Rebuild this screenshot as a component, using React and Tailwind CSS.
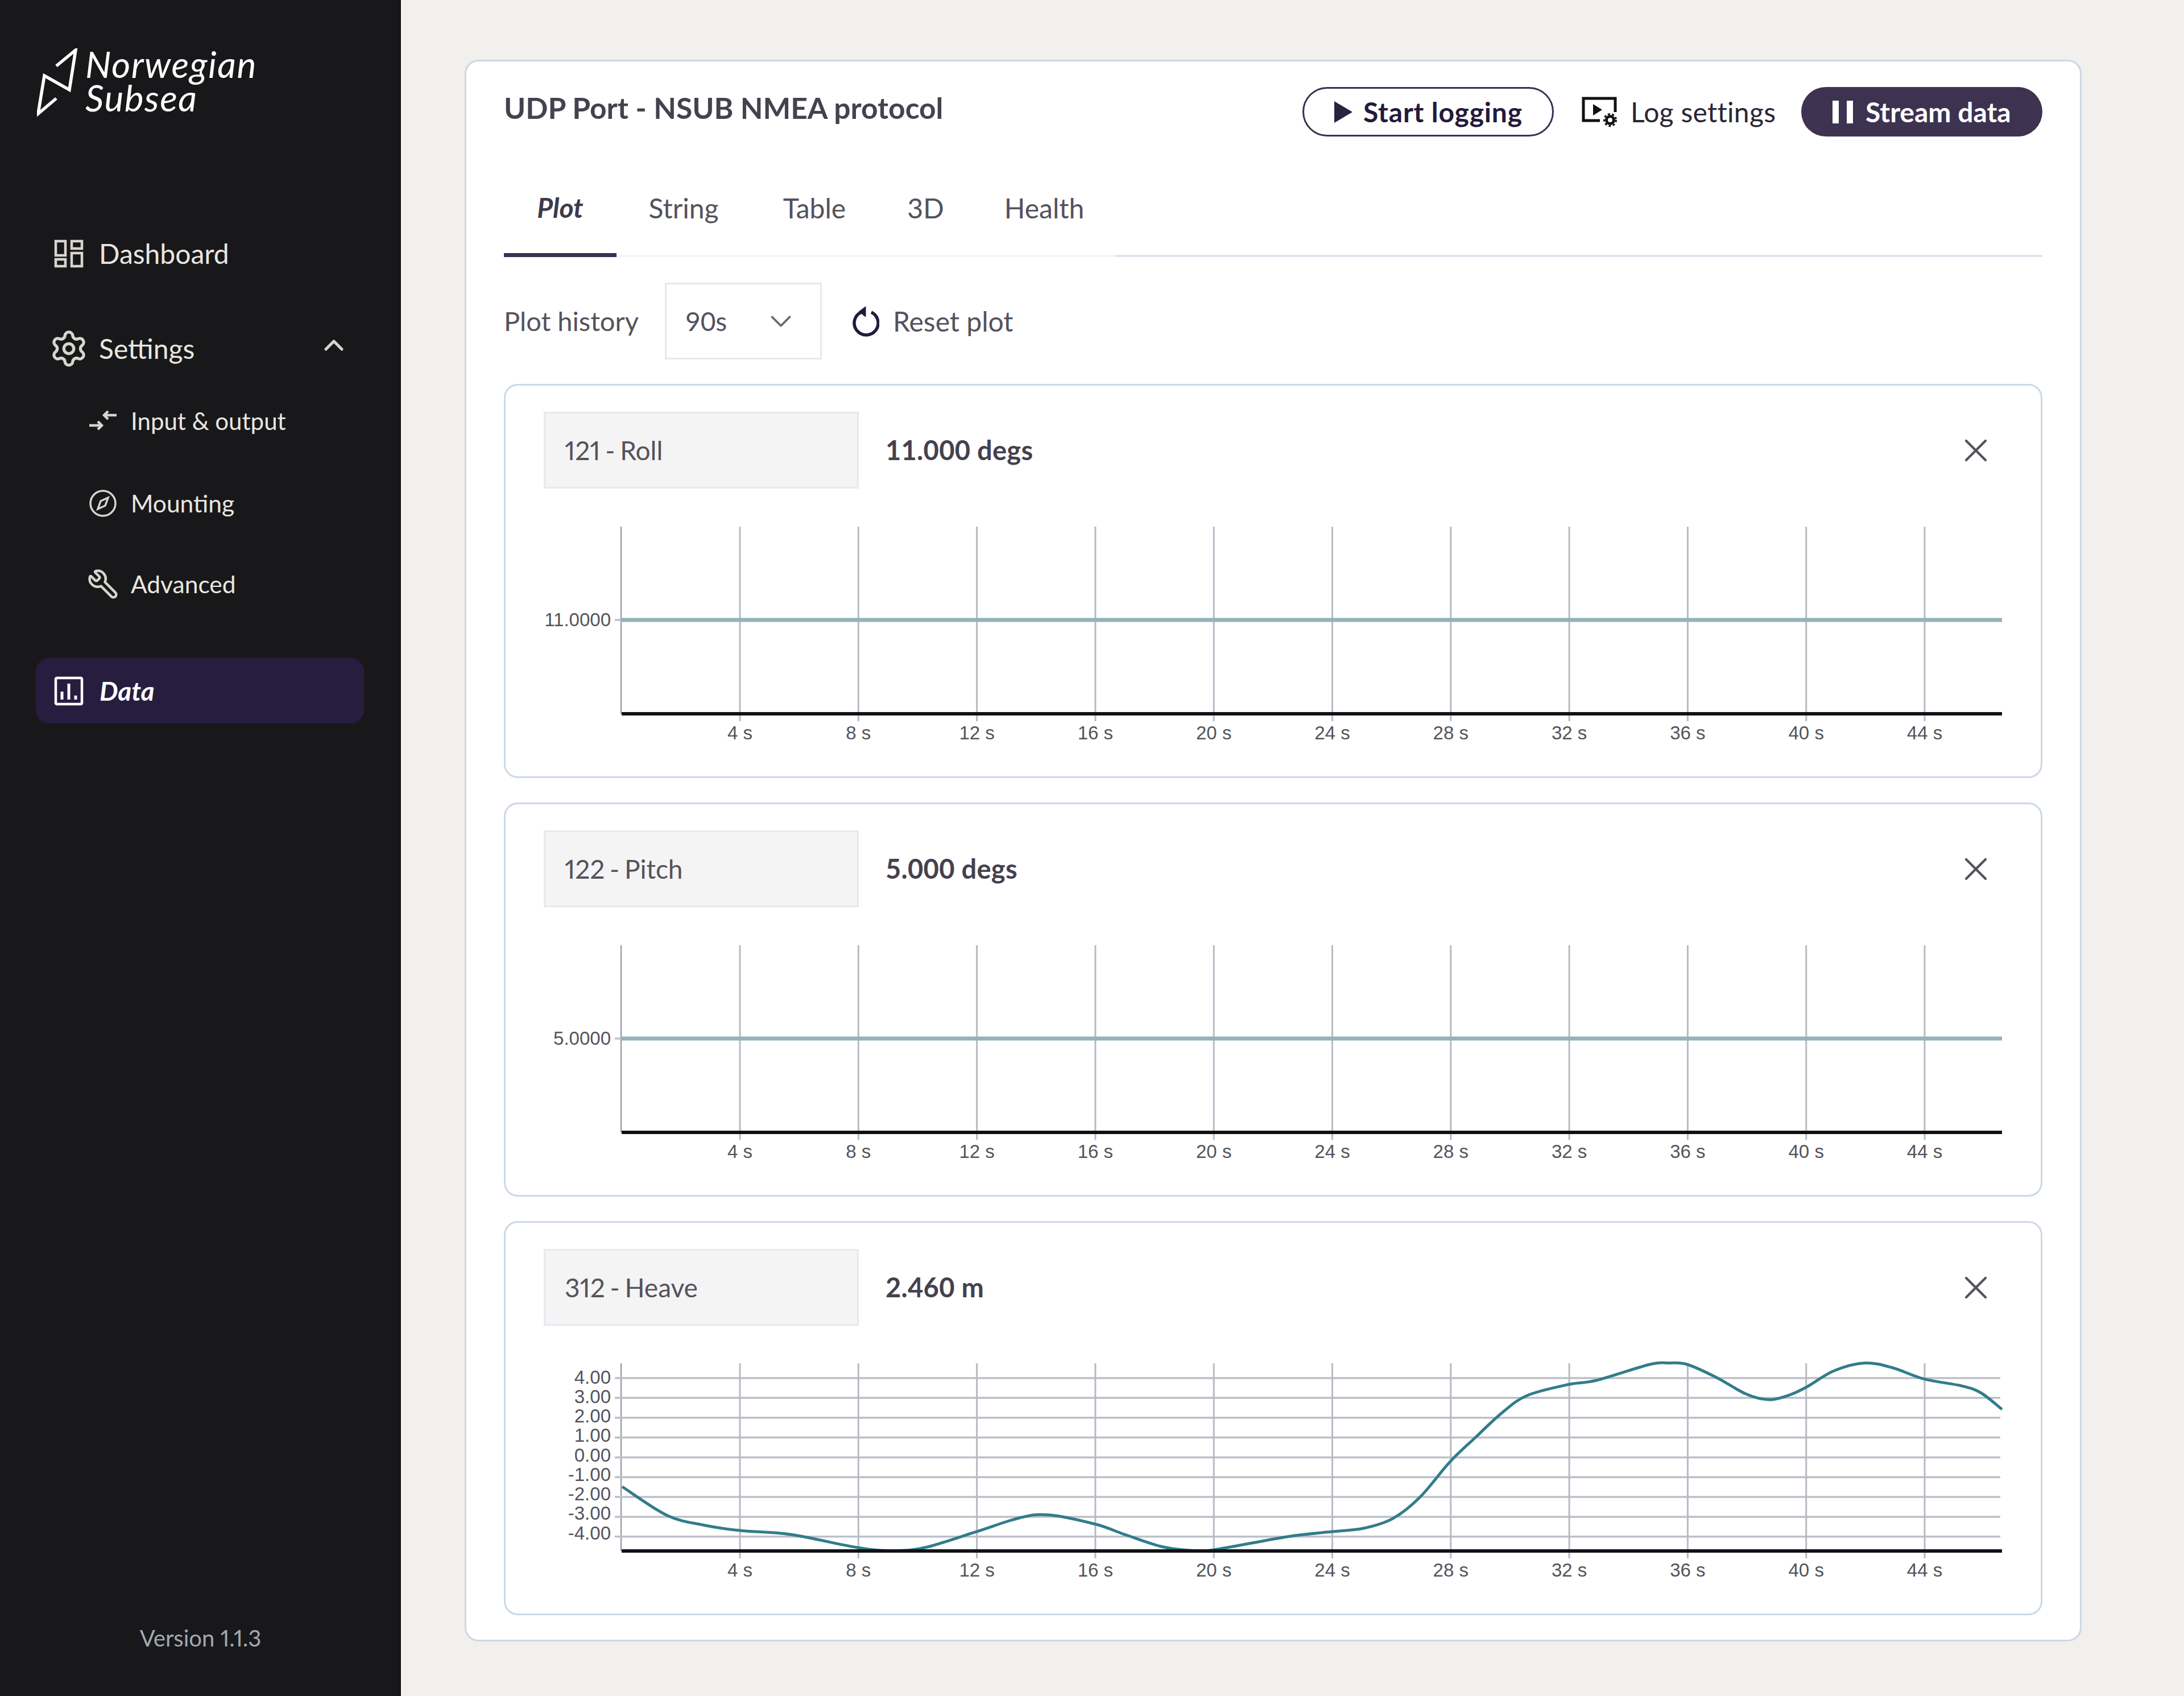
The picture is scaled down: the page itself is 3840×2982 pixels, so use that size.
import React from "react";
import { Settings, ChevronUp, Wrench, ChevronDown, X } from "lucide-react";

const FONT = "font-['Lato','Noto_Sans',sans-serif]";
const CHART_FONT = "'Liberation Sans', Arial, sans-serif";

const curve = [
  [1094,2613],[1173,2663.5],[1237,2680.5],[1301,2690],[1390,2697],[1508,2720],[1569,2725.5],[1626,2720],[1715,2692.6],[1792,2668],[1843,2662.5],
  [1926.5,2679],[1977.5,2697],[2041,2718],[2092,2725],[2134,2724],[2264.5,2700.7],[2342,2692],[2398,2686],[2449.5,2668.6],[2497,2631],
  [2550,2568.6],[2593,2527.5],[2641,2483],[2685.5,2452.5],[2759,2433],[2807,2426],[2900.5,2398],[2935,2395.5],[2966.5,2398],[3018,2421],
  [3070,2450],[3110,2460],[3144,2452.6],[3176,2438],[3225,2409],[3279,2395.5],[3328,2404],[3383,2423.6],[3449,2435.7],[3483,2448],[3520,2477],
].map(([x, y]) => [x - 956, y - 2372]);

function smooth(p) {
  let d = `M${p[0][0]} ${p[0][1]}`;
  for (let i = 0; i < p.length - 1; i++) {
    const a = p[Math.max(i - 1, 0)], b = p[i], c = p[i + 1], e = p[Math.min(i + 2, p.length - 1)];
    const c1 = [b[0] + (c[0] - a[0]) / 6, b[1] + (c[1] - a[1]) / 6];
    const c2 = [c[0] - (e[0] - b[0]) / 6, c[1] - (e[1] - b[1]) / 6];
    d += ` C${c1[0].toFixed(1)} ${c1[1].toFixed(1)} ${c2[0].toFixed(1)} ${c2[1].toFixed(1)} ${c[0]} ${c[1]}`;
  }
  return d;
}

const ticks = [4, 8, 12, 16, 20, 24, 28, 32, 36, 40, 44];

function Chart({ yTicks, flat, series }) {
  const top = series ? 24 : 25;
  const axis = 354;
  return (
    <svg width="2600" height="420" className="block mt-[42px]" fontFamily={CHART_FONT}>
      <line x1="136" x2="136" y1={top} y2={axis} stroke="#9ba0a8" strokeWidth="2.5" />
      {yTicks.map(([label, y, ly]) => (
        <g key={label}>
          <line x1="125" x2={series ? 2561 : 136} y1={y} y2={y} stroke="#bcc0c8" strokeWidth="3.5" />
          <text x="118" y={ly} textAnchor="end" dominantBaseline="central" fontSize="33" fill="#54545c">{label}</text>
        </g>
      ))}
      {ticks.map((t, i) => {
        const x = 345 + i * 208.3;
        return (
          <g key={t}>
            <line x1={x} x2={x} y1={top} y2={axis + 13} stroke="#b6bbc3" strokeWidth="3" />
            <text x={x} y={axis + 33} textAnchor="middle" dominantBaseline="central" fontSize="33" fill="#54545c">{t} s</text>
          </g>
        );
      })}
      {flat !== undefined && <line x1="136" x2="2564" y1={flat} y2={flat} stroke="#94b2b9" strokeWidth="7" />}
      {series && <path d={smooth(curve)} fill="none" stroke="#327c8a" strokeWidth="5" strokeLinejoin="round" />}
      <line x1="137" x2="2564" y1={axis} y2={axis} stroke="#101114" strokeWidth="6" />
    </svg>
  );
}

function Panel({ label, value, yTicks, flat, series }) {
  return (
    <div className="h-[693px] border-[3px] border-[#cbd8e7] rounded-[24px] bg-white pt-[46px] pl-[67px]">
      <div className="flex items-center">
        <div className="w-[554px] h-[135px] bg-[#f4f4f4] border-[3px] border-[#e6e9ef] flex items-center pl-[34px] text-[46px] text-[#55525c] proportional-nums [word-spacing:-3px]">{label}</div>
        <div className="ml-[47px] text-[47px] tracking-[0.3px] font-bold text-[#45414e]">{value}</div>
        <X className="ml-auto mr-[80px] w-[68px] h-[68px] text-[#55525c]" strokeWidth={1.5} />
      </div>
      <Chart yTicks={yTicks} flat={flat} series={series} />
    </div>
  );
}

function NavRow({ icon, children, className = "", textClass = "" }) {
  return (
    <div className={`flex items-center h-[60px] ${className}`}>
      {icon}
      <span className={textClass}>{children}</span>
    </div>
  );
}

const heaveTicks = ["4.00", "3.00", "2.00", "1.00", "0.00", "-1.00", "-2.00", "-3.00", "-4.00"].map((l, i) => {
  const y = 50 + i * 34.85;
  return [l, y, y - 2 - i * 0.6];
});

export default function App() {
  return (
    <div className={`flex w-[3840px] h-[2982px] bg-[#f1f0ec] ${FONT}`}>
      <aside className="w-[707px] shrink-0 h-full bg-[#18181a] border-r-[2px] border-[#f8f8f5] flex flex-col pt-[85px]">
        <div className="flex h-[120px] pl-[65px]">
          <svg width="72" height="120" viewBox="65 85 72 120" className="shrink-0">
            <polyline points="99,116 133,88 122,158 78,133 67,200 99,173" fill="none" stroke="#ffffff" strokeWidth="5.5" />
          </svg>
          <div className="ml-[13px] -mt-[2px] text-[64px] leading-[59px] tracking-[1.5px] italic font-normal text-white">Norwegian<br />Subsea</div>
        </div>

        <NavRow className="mt-[211px] pl-[95px] text-[#e9e6e0] text-[48px]" icon={
          <svg width="52" height="50" viewBox="0 0 52 50" fill="none" stroke="#d8d5cf" strokeWidth="4.5" className="mr-[27px]">
            <rect x="3" y="3" width="17" height="25" /><rect x="31" y="3" width="18" height="13" />
            <rect x="3" y="35" width="17" height="12" /><rect x="31" y="24" width="18" height="23" />
          </svg>}>Dashboard</NavRow>

        <div className="mt-[107px] flex items-center h-[60px] pl-[86px] text-[#e9e6e0] text-[48px]">
          <Settings className="w-[70px] h-[70px] mr-[18px] text-[#d8d5cf]" strokeWidth={1.8} />
          <span>Settings</span>
          <ChevronUp className="w-[56px] h-[56px] ml-[217px] mb-[12px] text-[#d8d5cf]" strokeWidth={2.2} />
        </div>

        <NavRow className="mt-[67px] pl-[155px] text-[#e9e6e0] text-[42px]" icon={
          <svg width="52" height="40" viewBox="0 0 52 40" fill="none" stroke="#d8d5cf" strokeWidth="4.5" className="mr-[23px]">
            <path d="M2 28h22M17 21l7 7-7 7" /><path d="M50 10H28M35 3l-7 7 7 7" />
          </svg>}>Input &amp; output</NavRow>

        <NavRow className="mt-[85px] pl-[155px] text-[#e9e6e0] text-[42.5px]" icon={
          <svg width="52" height="52" viewBox="0 0 52 52" fill="none" stroke="#d8d5cf" strokeWidth="3.5" className="mr-[23px]">
            <circle cx="26" cy="26" r="22" /><path d="M35 16l-13 6-5 14 13-6z" />
          </svg>}>Mounting</NavRow>

        <NavRow className="mt-[82px] pl-[153px] text-[#e9e6e0] text-[42.5px]" icon={
          <Wrench className="w-[56px] h-[56px] mr-[21px] text-[#d8d5cf] -scale-x-100" strokeWidth={1.9} />}>Advanced</NavRow>

        <div className="mt-[100px] ml-[63px] w-[577px] h-[115px] rounded-[24px] bg-[#271d3f] flex items-center pl-[32px] text-white text-[46px] font-bold italic">
          <svg width="52" height="52" viewBox="0 0 52 52" fill="none" stroke="#ffffff" strokeWidth="4.5" className="mr-[28px]">
            <rect x="3" y="3" width="46" height="46" rx="2" /><path d="M14 41V27M26 41V13M38 41v-7" strokeWidth="5" />
          </svg>
          <span>Data</span>
        </div>

        <div className="mt-auto mb-[82px] text-center text-[40px] leading-[40px] text-[#a3a8af] proportional-nums">Version 1.1.3</div>
      </aside>

      <main className="flex-1 pl-[110px] pr-[180px] pt-[105px]">
        <div className="h-[2781px] bg-white border-[3px] border-[#cbd8e7] rounded-[24px] px-[66px] pt-[45px]">
          <div className="flex items-center h-[87px]">
            <h1 className="text-[51.5px] font-bold text-[#45414e] mb-[13px]">UDP Port - NSUB NMEA protocol</h1>
            <div className="ml-auto flex items-center">
              <div className="w-[442px] h-[87px] rounded-full border-[3px] border-[#3b3050] flex items-center pl-[53px] text-[#241a3a] text-[48px] font-bold tracking-[0.8px]">
                <svg width="32" height="38" viewBox="0 0 32 38" className="mr-[19px] shrink-0"><path d="M0 0l32 19L0 38z" fill="#2b2140" /></svg>
                <span>Start logging</span>
              </div>
              <div className="ml-[49px] w-[344px] flex items-center text-[48px] tracking-[0.3px] text-[#2b2535]">
                <svg width="62" height="54" viewBox="0 0 62 54" fill="none" className="mr-[24px] shrink-0">
                  <path d="M32 42H3V3h56v24" stroke="#111" strokeWidth="5" /><path d="M20 13l16 10-16 10z" fill="#111" />
                  <circle cx="50" cy="41" r="6.5" stroke="#111" strokeWidth="5" /><circle cx="50" cy="41" r="10.5" stroke="#111" strokeWidth="3" strokeDasharray="4 3.5" />
                </svg>
                <span>Log settings</span>
              </div>
              <div className="ml-[42px] w-[424px] h-[87px] rounded-full bg-[#3d3350] flex items-center pl-[55px] text-white text-[48px] font-bold">
                <svg width="36" height="40" viewBox="0 0 36 40" className="mr-[22px] shrink-0"><rect x="0" width="11" height="40" fill="#fff" /><rect x="25" width="11" height="40" fill="#fff" /></svg>
                <span>Stream data</span>
              </div>
            </div>
          </div>

          <div className="mt-[48px] flex items-end h-[164px]">
            <div className="h-full w-[198px] pb-[4px] flex items-center justify-center border-b-[7px] border-[#3b3050] text-[48px] font-bold italic text-[#3f3a4a]">Plot</div>
            {[["String", 236], ["Table", 224], ["3D", 167], ["Health", 250]].map(([t, w]) => (
              <div key={t} style={{ width: w }} className="h-full pb-[4px] flex items-center justify-center border-b-[4px] border-[#f5f5f5] text-[48px] text-[#55525c]">{t}</div>
            ))}
            <div className="flex-1 border-b-[4px] border-[#e0e6ef]" />
          </div>

          <div className="mt-[45px] flex items-center">
            <span className="text-[47px] text-[#55525c] w-[238px]">Plot history</span>
            <div className="ml-[45px] w-[276px] h-[135px] border-[3px] border-[#e6e9ef] flex items-center pl-[33px] text-[46px] text-[#55525c]">
              <span>90s</span>
              <ChevronDown className="ml-[64px] w-[62px] h-[62px] text-[#6b6873]" strokeWidth={1.5} />
            </div>
            <svg width="48" height="56" viewBox="0 0 48 56" fill="none" stroke="#241a3a" strokeWidth="5.5" className="ml-[53px] mr-[24px]">
              <path d="M16 12A21 21 0 1 0 34 12" /><path d="M24 2v18L12 11z" fill="#241a3a" strokeWidth="1" />
            </svg>
            <span className="text-[48px] text-[#55525c]">Reset plot</span>
          </div>

          <div className="mt-[43px] flex flex-col gap-[43px]">
            <Panel label="121 - Roll" value="11.000 degs" yTicks={[["11.0000", 189, 188]]} flat={189} />
            <Panel label="122 - Pitch" value="5.000 degs" yTicks={[["5.0000", 189, 188]]} flat={189} />
            <Panel label="312 - Heave" value="2.460 m" yTicks={heaveTicks} series />
          </div>
        </div>
      </main>
    </div>
  );
}
